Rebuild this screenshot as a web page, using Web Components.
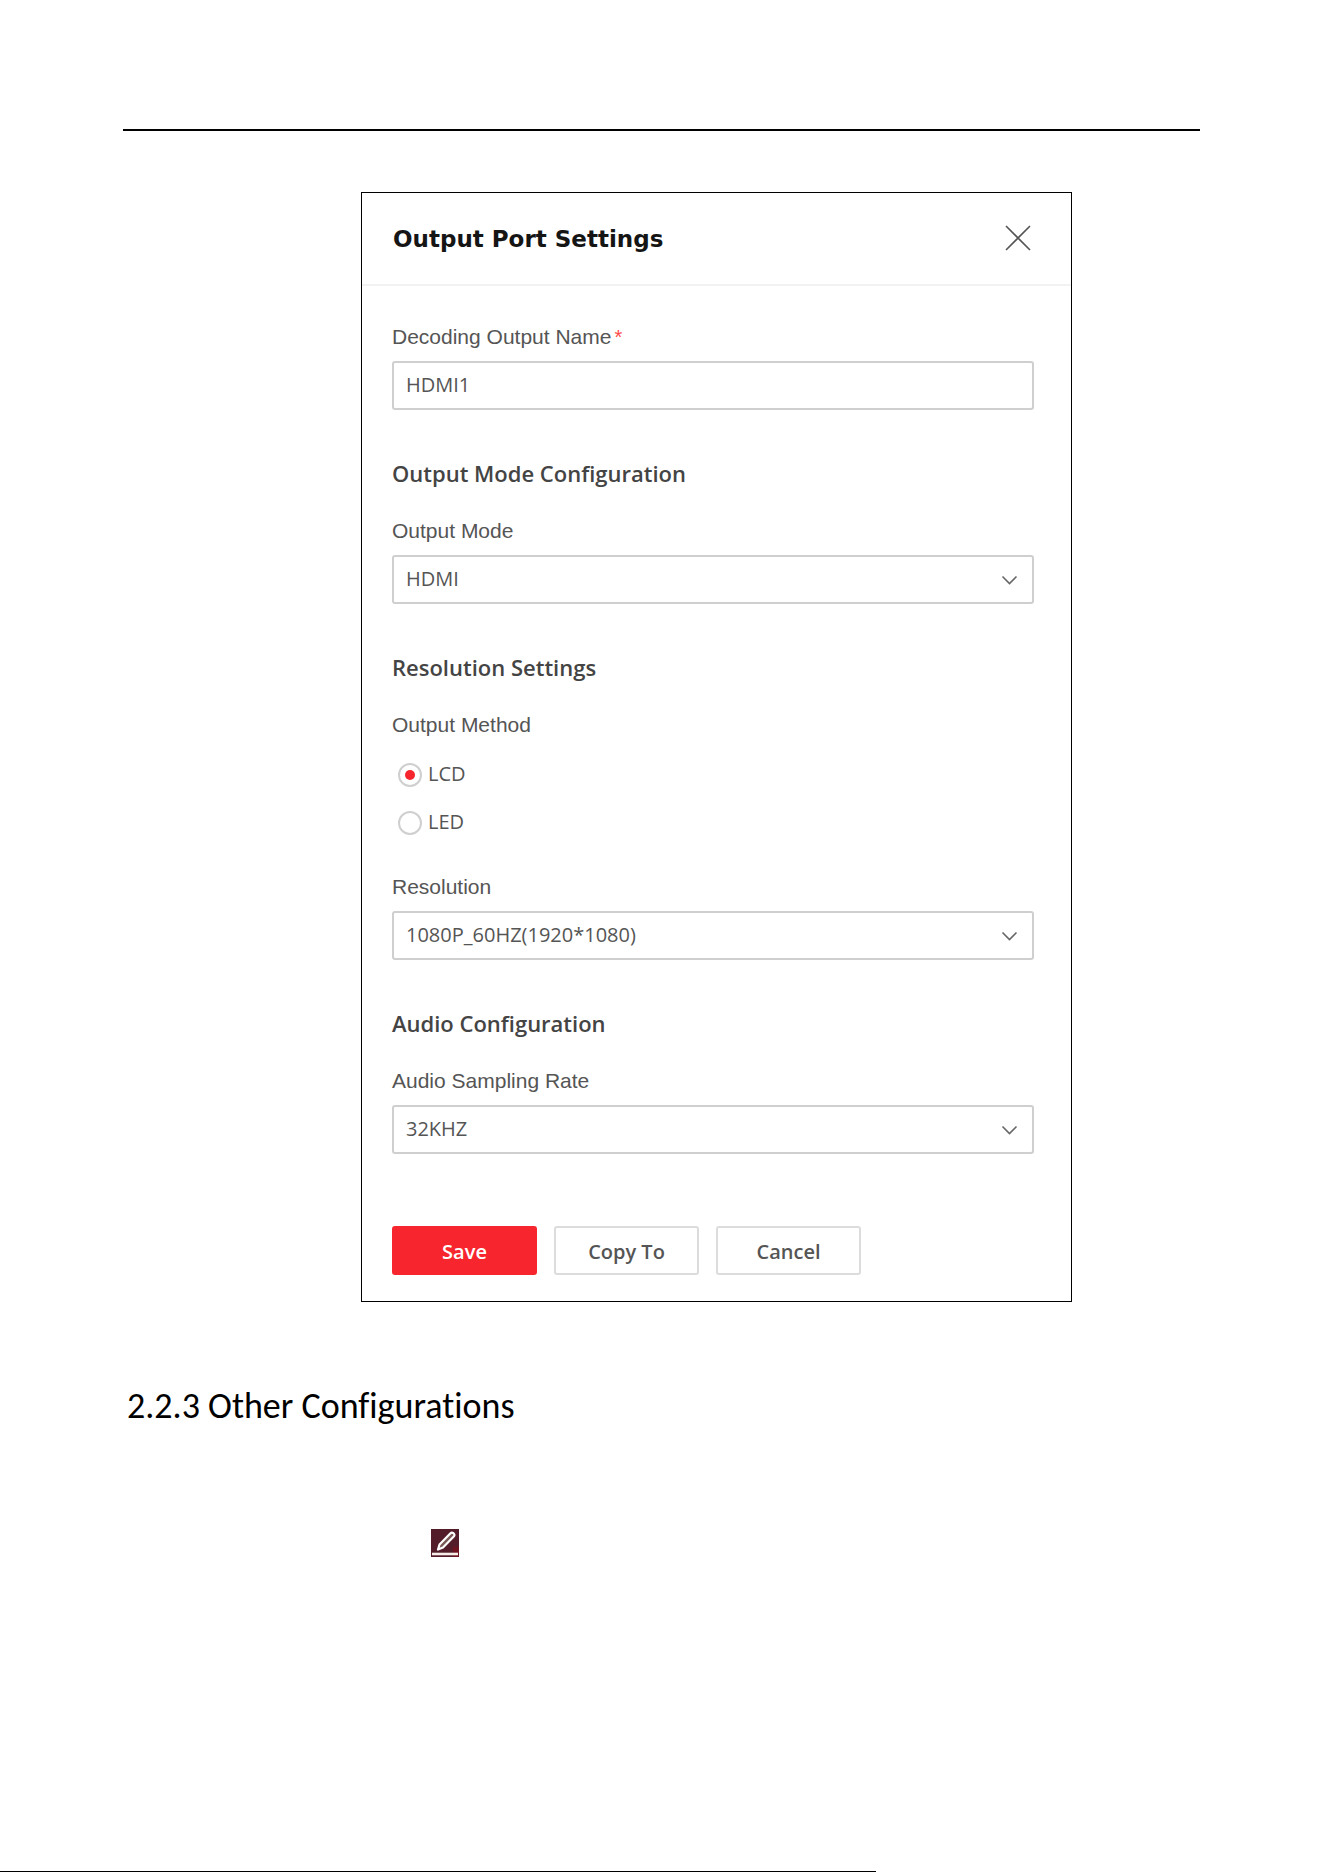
<!DOCTYPE html>
<html lang="en">
<head>
<meta charset="utf-8">
<meta name="viewport" content="width=device-width, initial-scale=1">
<title>Output Port Settings</title>
<style>
  html {
    --ui-font: "Segoe UI", "Open Sans", "Noto Sans", sans-serif;
    --label-font: "Liberation Sans", Arial, sans-serif;
    --text: #555;
    --line: #cfcfcf;
    --accent: #f7252d;
  }
  body {
    margin: 0;
    background: #fff;
    font-family: var(--ui-font);
    font-size: 20px;
  }
</style>
</head>
<body>

<manual-page>
  <settings-dialog heading="Output Port Settings">
    <text-field label="Decoding Output Name" value="HDMI1" required></text-field>
    <settings-section heading="Output Mode Configuration">
      <select-field label="Output Mode" options="HDMI,DVI"></select-field>
    </settings-section>
    <settings-section heading="Resolution Settings">
      <radio-field label="Output Method" options="LCD,LED"></radio-field>
      <select-field label="Resolution" options="1080P_60HZ(1920*1080),1080P_50HZ(1920*1080)"></select-field>
    </settings-section>
    <settings-section heading="Audio Configuration">
      <select-field label="Audio Sampling Rate" options="32KHZ,44.1KHZ,48KHZ"></select-field>
    </settings-section>
    <action-button slot="actions" primary>Save</action-button>
    <action-button slot="actions">Copy To</action-button>
    <action-button slot="actions">Cancel</action-button>
  </settings-dialog>
  <manual-heading slot="text">2.2.3 Other Configurations</manual-heading>
  <edit-icon slot="text"></edit-icon>
</manual-page>

<script>
// Shared by every field with a caption above its control
const fieldStyles = `
  * { box-sizing: border-box; }
  :host { display: block; color: var(--text); }
  .label {
    display: block;
    margin-bottom: 11px;
    padding: 0;
    font: 21px/26px var(--label-font);
  }
  .control {
    display: block;
    width: 100%;
    height: 49px;
    margin: 0;
    padding: 0 12px 2px;
    border: 2px solid var(--line);
    border-radius: 3px;
    background: #fff;
    color: var(--text);
    font: 20px/28px var(--ui-font);
    outline: none;
    appearance: none;
  }
`;

class ManualPage extends HTMLElement {
  constructor() {
    super();
    this.attachShadow({ mode: 'open' }).innerHTML = `
      <style>
        :host {
          display: flex;
          flex-direction: column;
          min-height: 100vh;
        }
        main { margin: 129px 124px 0 123px; }
        header { border-top: 2px solid #000; margin-bottom: 61px; }
        .figure { padding: 0 128px 0 238px; }
        .text { padding: 0 4px; }
        footer {
          margin: auto 448px 0 0;
          border-top: 1px solid #000;
        }
      </style>
      <main>
        <header></header>
        <div class="figure"><slot></slot></div>
        <div class="text"><slot name="text"></slot></div>
      </main>
      <footer></footer>
    `;
  }
}

class ManualHeading extends HTMLElement {
  constructor() {
    super();
    this.attachShadow({ mode: 'open' }).innerHTML = `
      <style>
        :host { display: block; color: #000; }
        h2 {
          margin: 83px 0 102px;
          font: 400 36px/42px Calibri, Carlito, Lato, sans-serif;
          font-variant-ligatures: none;
        }
      </style>
      <h2><slot></slot></h2>
    `;
  }
}

class EditIcon extends HTMLElement {
  constructor() {
    super();
    this.attachShadow({ mode: 'open' }).innerHTML = `
      <style>
        :host { display: block; padding-left: 304px; }
        svg { display: block; }
      </style>
      <svg width="28" height="28" viewBox="0 0 28 28" role="img" aria-label="Edit">
        <rect width="28" height="28" fill="#521c28"/>
        <path d="M22 18h6v10h-6z" fill="#6e1420"/>
        <path d="M1 25h26" stroke="#f6ece8" stroke-width="2.600"/>
        <path d="M7 20.500l1.500-5L19.500 4.200c1.800-1.800 5.200 1 3.500 3L12 18.500z"
              fill="#7a5a55" stroke="#fff" stroke-width="2.200" stroke-linejoin="round"/>
      </svg>
    `;
  }
}

class SettingsDialog extends HTMLElement {
  constructor() {
    super();
    this.attachShadow({ mode: 'open' }).innerHTML = `
      <style>
        :host {
          display: block;
          border: 1px solid #000;
          background: #fff;
        }
        header {
          display: flex;
          align-items: center;
          justify-content: space-between;
          height: 91px;
          padding: 0 39px 0 31px;
          border-bottom: 2px solid #f2f2f2;
        }
        h1 {
          margin: 0;
          color: #151515;
          font: 700 23px/32px "DejaVu Sans", Verdana, sans-serif;
        }
        button {
          padding: 0 0 2px;
          border: 0;
          background: none;
          cursor: pointer;
        }
        svg { display: block; }
        form { padding: 38px 37px 26px 30px; }
        .actions {
          display: flex;
          gap: 17px;
          margin-top: 72px;
        }
      </style>
      <header>
        <h1></h1>
        <button type="button" aria-label="Close">
          <svg width="28" height="28" viewBox="0 0 28 28">
            <path d="M2 2L26 26M26 2L2 26" fill="none" stroke="#555" stroke-width="1.600"/>
          </svg>
        </button>
      </header>
      <form>
        <slot></slot>
        <div class="actions"><slot name="actions"></slot></div>
      </form>
    `;
  }

  connectedCallback() {
    this.shadowRoot.querySelector('h1').textContent = this.getAttribute('heading');
  }
}

class SettingsSection extends HTMLElement {
  constructor() {
    super();
    this.attachShadow({ mode: 'open' }).innerHTML = `
      <style>
        :host { display: block; margin-top: 48px; }
        h2 {
          margin: 0 0 30px;
          color: #444;
          font: 600 22px/30px var(--ui-font);
        }
      </style>
      <h2></h2>
      <slot></slot>
    `;
  }

  connectedCallback() {
    this.shadowRoot.querySelector('h2').textContent = this.getAttribute('heading');
  }
}

class TextField extends HTMLElement {
  constructor() {
    super();
    this.attachShadow({ mode: 'open' }).innerHTML = `
      <style>
        ${fieldStyles}
        .mark { margin-left: 3px; color: #ff4a4a; font-size: 20px; line-height: 20px; }
      </style>
      <label class="label" for="input"></label>
      <input class="control" id="input" type="text">
    `;
  }

  connectedCallback() {
    const label = this.shadowRoot.querySelector('label');
    const input = this.shadowRoot.querySelector('input');
    label.textContent = this.getAttribute('label');
    input.value = this.getAttribute('value') || '';
    if (this.hasAttribute('required')) {
      input.required = true;
      label.insertAdjacentHTML('beforeend', '<span class="mark">*</span>');
    }
  }
}

class SelectField extends HTMLElement {
  constructor() {
    super();
    this.attachShadow({ mode: 'open' }).innerHTML = `
      <style>
        ${fieldStyles}
        .box { display: grid; align-items: center; }
        .control, svg { grid-area: 1 / 1; }
        svg {
          justify-self: end;
          margin-right: 16px;
          pointer-events: none;
        }
      </style>
      <label class="label" for="select"></label>
      <div class="box">
        <select class="control" id="select"></select>
        <svg width="17" height="10" viewBox="0 0 17 10">
          <path d="M1.500 1.500l7 7 7-7" fill="none" stroke="#666" stroke-width="1.600"/>
        </svg>
      </div>
    `;
  }

  connectedCallback() {
    this.shadowRoot.querySelector('label').textContent = this.getAttribute('label');
    this.shadowRoot.querySelector('select').innerHTML = this.getAttribute('options')
      .split(',').map(text => `<option>${text}</option>`).join('');
  }
}

class RadioField extends HTMLElement {
  constructor() {
    super();
    this.attachShadow({ mode: 'open' }).innerHTML = `
      <style>
        ${fieldStyles}
        :host { margin-bottom: 27px; }
        fieldset { margin: 0; padding: 0; border: 0; }
        .label { margin-bottom: 13px; }
        .option {
          display: flex;
          align-items: center;
          gap: 6px;
          height: 48px;
          padding-left: 6px;
          font: 20px/28px var(--ui-font);
        }
        .option span { padding-bottom: 2px; }
        input {
          display: grid;
          place-items: center;
          width: 24px;
          height: 24px;
          margin: 0;
          border: 2px solid var(--line);
          border-radius: 50%;
          background: #fff;
          appearance: none;
        }
        input:checked::before {
          content: "";
          width: 10px;
          height: 10px;
          border-radius: 50%;
          background: var(--accent);
        }
      </style>
      <fieldset>
        <legend class="label"></legend>
        <div class="options"></div>
      </fieldset>
    `;
  }

  connectedCallback() {
    this.shadowRoot.querySelector('legend').textContent = this.getAttribute('label');
    this.shadowRoot.querySelector('.options').innerHTML = this.getAttribute('options')
      .split(',').map((text, i) => `
        <label class="option">
          <input type="radio" name="option" value="${text}"${i === 0 ? ' checked' : ''}>
          <span>${text}</span>
        </label>
      `).join('');
  }
}

class ActionButton extends HTMLElement {
  constructor() {
    super();
    this.attachShadow({ mode: 'open' }).innerHTML = `
      <style>
        :host { display: block; }
        button {
          box-sizing: border-box;
          min-width: 145px;
          height: 49px;
          padding: 2px 16px 0;
          border: 2px solid #dcdcdc;
          border-radius: 3px;
          background: #fff;
          color: var(--text);
          font: 600 20px/28px var(--ui-font);
          cursor: pointer;
        }
        :host([primary]) button {
          border-color: var(--accent);
          background: var(--accent);
          color: #fff;
        }
      </style>
      <button type="button"><slot></slot></button>
    `;
  }
}

customElements.define('manual-page', ManualPage);
customElements.define('manual-heading', ManualHeading);
customElements.define('edit-icon', EditIcon);
customElements.define('settings-dialog', SettingsDialog);
customElements.define('settings-section', SettingsSection);
customElements.define('text-field', TextField);
customElements.define('select-field', SelectField);
customElements.define('radio-field', RadioField);
customElements.define('action-button', ActionButton);
</script>
</body>
</html>
